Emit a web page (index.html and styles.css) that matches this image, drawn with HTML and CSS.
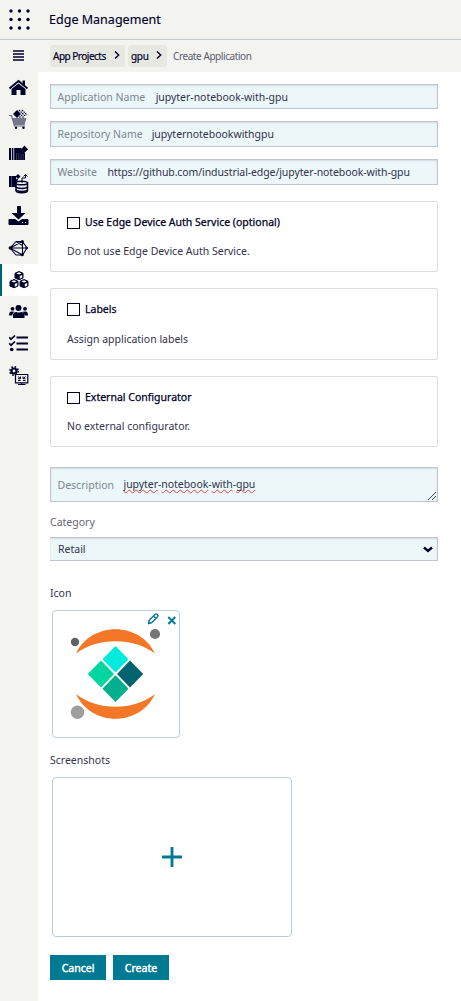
FILE: index.html
```html
<!DOCTYPE html>
<html lang="en">
<head>
<meta charset="utf-8">
<title>Edge Management</title>
<link rel="stylesheet" href="styles.css">
</head>
<body>
<header class="topbar">
  <svg class="launcher" width="22" height="22" viewBox="0 0 22 22"><g fill="#000028"><circle cx="2" cy="2" r="1.700"/><circle cx="10.500" cy="2" r="1.700"/><circle cx="19" cy="2" r="1.700"/><circle cx="2" cy="10.500" r="1.700"/><circle cx="10.500" cy="10.500" r="1.700"/><circle cx="19" cy="10.500" r="1.700"/><circle cx="2" cy="19" r="1.700"/><circle cx="10.500" cy="19" r="1.700"/><circle cx="19" cy="19" r="1.700"/></g></svg>
  <h1 class="product">Edge Management</h1>
</header>
<div class="shell">
  <nav class="sidebar">
    <a class="item"><svg width="38" height="32" viewBox="0 0 38 32"><path d="M13 11h11M13 14h11M13 17h11M13 20h11" stroke="#000028" stroke-width="1.500" fill="none"/></svg></a>
    <a class="item"><svg width="38" height="32" viewBox="0 0 38 32"><path fill="#000028" d="M18.500 11.500 25.500 17v6h-5v-5h-4v5h-5v-6z"/><path fill="none" stroke="#000028" stroke-width="1.900" d="m9.500 16.500 9-7.500 9 7.500"/><path fill="#000028" d="M22.500 8.500h2.500v5l-2.500-2z"/></svg></a>
    <a class="item"><svg width="38" height="32" viewBox="0 0 38 32"><path fill="#77778b" d="M12 14h14.500l-2 7H14.500z"/><path fill="none" stroke="#66667c" stroke-width="1.200" d="M9 11.500h2.500l3 10.500H25"/><path fill="#000028" d="m17 6 4 4-4 4-4-4z"/><path fill="none" stroke="#000028" stroke-width="1.200" stroke-dasharray="1.500 .8" d="m19 6 4 4-4 4M22 6l4 4-4 4"/><circle cx="16" cy="23.800" r="1.200" fill="#000028"/><circle cx="23.500" cy="23.800" r="1.200" fill="#000028"/></svg></a>
    <a class="item"><svg width="38" height="32" viewBox="0 0 38 32"><g fill="#000028"><path d="M9 12h2v12H9zM11.800 12h1.600v12h-1.600zM14.200 12H21l4 5v7H14.200z"/><path d="m24.500 9.500 3.500 3.700-3.500 3.600-3.500-3.600z"/></g><path d="M16.500 17v7M18.700 17v7M21 18v6M23.200 18v6" stroke="#b9b9c3" stroke-width=".3"/></svg></a>
    <a class="item"><svg width="38" height="32" viewBox="0 0 38 32"><g fill="#000028"><path d="M9 8h2v11H9zM11.300 8H16v3h2l-1 4h-1v4h-4.700z"/><path d="m18 6 2.500 2.500L18 11l-2.500-2.500z"/></g><g fill="#f3f3f0" stroke="#000028" stroke-width="1.500"><path d="M16 15v7.500c0 3 11.500 3 11.500 0V15z"/><path d="M16 18.500c0 2.500 11.500 2.500 11.500 0M16 21.500c0 2.500 11.500 2.500 11.500 0" fill="none"/><ellipse cx="21.700" cy="15" rx="5.800" ry="1.800"/></g><path d="M22 13.500V10h3.500V7M23.500 8.500l2-2 2 2M22 15v-2" stroke="#000028" fill="none"/></svg></a>
    <a class="item"><svg width="38" height="32" viewBox="0 0 38 32"><path fill="#000028" d="M17 6h4v7h4.500l-7 6.500-7-6.500H17z"/><path fill="#000028" d="M9.500 19h5.500l3.500 2.500L22 19h5.500q1 0 1 1v4q0 1-1 1h-18q-1 0-1-1v-4q0-1 1-1z"/><path stroke="#f3f3f0" d="M22 22.500h1.200M25 22.500h1.200"/></svg></a>
    <a class="item"><svg width="38" height="32" viewBox="0 0 38 32"><path d="m10 16 6-6.500h6.500L27 16l-4.500 7H16zM10 16h17M10 16l12.500-6.500L27 16M10 16l12.500 7V9.500M16 9.500l6.500 4" fill="none" stroke="#000028" stroke-width="1.100" stroke-linejoin="round"/><g fill="#000028"><circle cx="10.300" cy="16" r="1.700"/><circle cx="22.300" cy="9.500" r="1.500"/><circle cx="26.800" cy="16" r="1.200"/><circle cx="22.300" cy="22.800" r="1.500"/></g></svg></a>
    <a class="item active"><svg width="38" height="32" viewBox="0 0 38 32"><g id="box"><path fill="#000028" stroke="#000028" stroke-linejoin="round" d="m19 7.500 4 1.800v4.700l-4 1.800-4-1.800V9.300z"/><path fill="#fff" d="m19 8.200 2.600 1.200-2.600 1.100-2.600-1.100zM19.800 12l2.400-1v2.600l-2.400 1.100z"/></g><use href="#box" x="-5" y="8"/><use href="#box" x="5" y="8"/></svg></a>
    <a class="item"><svg width="38" height="32" viewBox="0 0 38 32"><g fill="#000028"><circle cx="18.500" cy="12" r="3"/><circle cx="12.500" cy="12.800" r="1.900"/><circle cx="25" cy="12.800" r="1.900"/><path d="M13 22v-2.500q0-3.500 3.500-3.500 2.500 1 4.500 0 3.500 0 3.500 3.500V22zM9 19.500q0-3.500 2-4l3.500.2q-2 1-2.300 3.800zM28 19.500q0-3.500-2-4l-3.500.2q2 1 2.300 3.800z"/></g></svg></a>
    <a class="item"><svg width="38" height="32" viewBox="0 0 38 32"><path fill="none" stroke="#000028" stroke-width="2" d="M16.500 9.500H28M16.500 15.500H28M16.500 21.500H28"/><path fill="none" stroke="#000028" stroke-width="1.700" d="m9.300 9.300 1.700 1.900 4-3.700M9.300 15.300l1.700 1.900 4-3.700"/><circle cx="11.700" cy="21.500" r="1.800" fill="#000028"/></svg></a>
    <a class="item"><svg width="38" height="32" viewBox="0 0 38 32"><circle cx="14" cy="11" r="2.500" fill="none" stroke="#000028" stroke-width="2.200"/><circle cx="14" cy="11" r="4.200" fill="none" stroke="#000028" stroke-width="1.600" stroke-dasharray="1.700 1.600"/><path fill="#f3f3f0" stroke="#000028" stroke-width="1.200" d="M15.500 14.500h12.300v8.300H15.500z"/><path fill="none" stroke="#000028" d="M18 24.500h7.500M21.700 23v2M18 16.500l2.500 2.200M20.500 16.500v2.200H18M25.500 16.500 23 18.700M23 16.500v2.200h2.500M18 20.500h2.500M23 20.500h2.500"/></svg></a>
  </nav>
  <div class="page">
    <div class="crumbs">
      <a class="crumb first"><span class="c-projects">App Projects</span><svg width="6" height="8" viewBox="0 0 6 8"><path d="M1 .5 4.700 4 1 7.500"/></svg></a>
      <a class="crumb second"><span class="c-gpu">gpu</span><svg width="6" height="8" viewBox="0 0 6 8"><path d="M1 .5 4.700 4 1 7.500"/></svg></a>
      <span class="current">Create Application</span>
    </div>
    <main class="form">
      <div class="field name"><label>Application Name</label><span>jupyter-notebook-with-gpu</span></div>
      <div class="field repo"><label>Repository Name</label><span>jupyternotebookwithgpu</span></div>
      <div class="field site"><label>Website</label><span>https://github.com/industrial-edge/jupyter-notebook-with-gpu</span></div>
      <section class="card auth"><div class="check"><i class="box"></i><b>Use Edge Device Auth Service (optional)</b></div><p>Do not use Edge Device Auth Service.</p></section>
      <section class="card labels"><div class="check"><i class="box"></i><b>Labels</b></div><p>Assign application labels</p></section>
      <section class="card config"><div class="check"><i class="box"></i><b>External Configurator</b></div><p>No external configurator.</p></section>
      <div class="field desc"><label>Description</label><span><u>jupyter</u>-<u>notebook</u>-<u>with</u>-<u>gpu</u></span>
        <svg class="grip" width="10" height="10" viewBox="0 0 10 10"><path d="M1 9 9 1M5 9l4-4" stroke="#444" fill="none"/></svg></div>
      <div class="label category">Category</div>
      <div class="select"><span>Retail</span><svg width="10" height="7" viewBox="0 0 10 7"><path d="m1 1.500 4 3.500 4-3.500" fill="none" stroke="#000028" stroke-width="2.400"/></svg></div>
      <div class="label icon-label">Icon</div>
      <div class="icon-tile">
        <svg width="126" height="126" viewBox="53 611 126 126">
          <path fill="#f37726" d="M76 653.500C91 621 140 621 155 653.500 134 637 97 637 76 653.500zM76 694C91 727 140 727 155 694 134 711 97 711 76 694z"/>
          <circle cx="75" cy="642" r="4.200" fill="#616262"/><circle cx="155" cy="634" r="5.100" fill="#767677"/><circle cx="77.500" cy="712.200" r="6.700" fill="#9e9e9e"/>
          <path fill="#00ebdc" d="m115.500 646 13 13.200-13 13.200-13-13.200z"/>
          <path fill="#00d7a0" d="m101 660.600 13 13.400-13 13.400L87.800 674z"/>
          <path fill="#00646e" d="m130 660.600 13.200 13.400L130 687.400 117 674z"/>
          <path fill="#00af8e" d="m115.500 675.300 13 13.400-13 13.300-13-13.300z"/>
          <g fill="none" stroke="#007993"><path stroke-width="1.400" stroke-linejoin="round" d="m148.500 623.500.7-3.300 6-6q1.200-.8 2.200.3t.2 2.200l-6 6zM153.500 616l2.500 2.500"/><path stroke-width="1.900" d="m168.300 617 7 7M175.300 617l-7 7"/></g>
        </svg>
      </div>
      <div class="label shots">Screenshots</div>
      <div class="drop"><svg width="20" height="20" viewBox="0 0 20 20"><path d="M10 0v20M0 10h20" stroke="#007993" stroke-width="2.800"/></svg></div>
      <div class="actions"><button class="btn">Cancel</button><button class="btn">Create</button></div>
    </main>
  </div>
</div>
</body>
</html>
```
FILE: styles.css
```css
* { box-sizing: border-box; }
body { margin: 0; background: #fff; color: #32324e; font: 10.500px/16px "Noto Sans", sans-serif; }
.topbar { display: flex; height: 40px; padding-left: 9px; background: #f3f3f0; border-bottom: 1px solid #c5c9d2; }
.launcher { margin-top: 9px; }
.product { margin: 10px 0 0 18px; font-size: 12.500px; line-height: 19px; font-weight: 400; color: #000028; -webkit-text-stroke: .15px #000028; letter-spacing: .02px; }
.shell { display: flex; height: 961px; }
.sidebar { flex: 0 0 38px; background: #f3f3f0; }
.item { display: block; height: 32px; }
.item svg { display: block; }
.item.active { background: #fff; box-shadow: inset 2px 0 #00646e; }
.page { flex: 1; min-width: 0; }
.crumbs { display: flex; height: 32px; padding: 5px 0 0 12px; background: #f3f3f0; }
.crumb { display: flex; align-items: center; justify-content: space-between; height: 22px; margin-right: 3px; padding: 0 5px 0 3px; background: #e8e8e3; border-radius: 3px; color: #000028; -webkit-text-stroke: .2px #000028; font-size: 10px; letter-spacing: -.500px; white-space: nowrap; }
.crumb svg { fill: none; stroke: #000028; stroke-width: 1.400; margin-top: -3px; }
.first { width: 75px; }
.second { width: 39px; }
.c-gpu { letter-spacing: -.300px; }
.current { margin: 3px 0 0 3px; font-size: 10px; letter-spacing: -.420px; color: #5b5b72; }
.form { display: flex; flex-direction: column; width: 400px; padding: 12px 0 0 12px; }
.field { position: relative; display: flex; align-items: center; height: 26px; padding-left: 6.500px; background: #ebf7f8; border: 1px solid #c2c5cf; box-shadow: inset 0 1px 2px #d2dce1; white-space: nowrap; }
.field label { color: #7d8793; margin-right: 10.500px; }
.field span { letter-spacing: -.030px; }
.name { height: 25px; margin-bottom: 12px; }
.repo { margin-bottom: 12px; }
.repo label { margin-right: 9px; }
.site { margin-bottom: 16px; }
.site span { letter-spacing: -.095px; }
.card { height: 72px; margin-bottom: 16px; padding: 12px 16px; border: 1px solid #dedfd9; border-radius: 2px; }
.card p { margin: 13px 0 0; }
.auth { height: 71px; }
.auth p, .config p { margin-top: 12px; }
.config { height: 71px; margin-bottom: 20px; }
.check { display: flex; align-items: center; height: 17px; }
.box { width: 13px; height: 13px; margin-right: 5px; border: 1px solid #000028; }
.auth .box, .config .box { height: 12px; }
.check b { padding-bottom: 2px; font-weight: 400; color: #000028; -webkit-text-stroke: .250px #000028; }
.desc { height: 35px; }
.desc label { margin-right: 9.500px; }
.desc span { padding-bottom: 2px; letter-spacing: -.050px; }
.desc u { text-decoration: underline wavy #f23c44 1px; text-underline-offset: 1px; text-decoration-skip-ink: none; }
.grip { position: absolute; right: 0; bottom: 0; }
.label { height: 16px; }
.category { margin: 12px 0 7px; color: #666679; }
.select { display: flex; justify-content: space-between; align-items: center; height: 24px; padding: 0 4px 0 8px; background: #ebf7f8; border: solid #c2c5cf; border-width: 1px 1px 1px 0; box-shadow: inset 0 1px 2px #d2dce1; }
.icon-label { margin: 24px 0 9px; }
.icon-tile { width: 128px; height: 128px; margin-left: 2px; border: 1px solid #bdccd7; border-radius: 4px; }
.icon-tile svg { display: block; }
.shots { margin: 14px 0 9px; }
.drop { display: grid; place-items: center; width: 240px; height: 160px; margin-left: 2px; border: 1px solid #bdccd7; border-radius: 4px; }
.actions { display: flex; gap: 7px; margin-top: 18px; }
.btn { width: 56px; height: 25px; padding: 0; border: 0; background: #007993; color: #fff; font: 10.500px "Noto Sans", sans-serif; -webkit-text-stroke: .450px #fff; }
```
